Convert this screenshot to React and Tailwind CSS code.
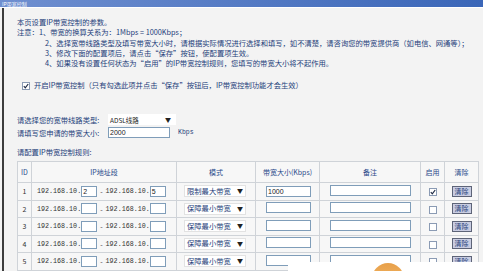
import React from 'react';

const font = { fontFamily: '"Noto Sans CJK SC", "Noto Sans", sans-serif' };

function Check({ checked }) {
  return (
    <span className="inline-flex w-[8px] h-[8px] border border-[#8b9bb4] bg-white items-center justify-center align-middle">
      {checked && (
        <svg width="6" height="6" viewBox="0 0 6 6">
          <path d="M0.8 3.2 L2.3 4.8 L5.2 1" stroke="#1e2a44" strokeWidth="1.2" fill="none" />
        </svg>
      )}
    </span>
  );
}

function Box({ w, value }) {
  return (
    <span
      className={`inline-flex h-[11px] ${w} border border-[#7f9db9] bg-white items-center pl-[1px] text-[7px] text-[#222] leading-none`}
      style={{ fontFamily: '"Liberation Sans", sans-serif' }}
    >
      {value}
    </span>
  );
}

function IpPart() {
  return (
    <span
      className="text-[6.7px] text-[#333]"
      style={{ fontFamily: '"Liberation Mono", monospace' }}
    >
      192.168.10.
    </span>
  );
}

function Row({ id, from, to, mode, bw, on }) {
  return (
    <tr className="h-[17.5px]">
      <td className="border border-[#cfd3d8] text-center text-[7px] text-[#333]">{id}</td>
      <td className="border border-[#cfd3d8] pl-[5px]">
        <div className="flex items-center">
          <IpPart />
          <Box w="w-[16px]" value={from} />
          <span className="text-[7px] text-[#333] px-[3px]">-</span>
          <IpPart />
          <Box w="w-[16px]" value={to} />
        </div>
      </td>
      <td className="border border-[#cfd3d8] pl-[7px]">
        <div className="flex items-center w-[62px] h-[12px] bg-white border border-[#e2e2e2] text-[7.3px] text-[#1f3f7a] pl-[2px] leading-none">
          <span className="flex-1">{mode}</span>
          <span className="text-[6px] text-[#222] pr-[2px]">▼</span>
        </div>
      </td>
      <td className="border border-[#cfd3d8] pl-[10px]">
        <Box w="w-[45px]" value={bw} />
      </td>
      <td className="border border-[#cfd3d8] pl-[10px]">
        <Box w="w-[81px]" value="" />
      </td>
      <td className="border border-[#cfd3d8] text-center">
        <Check checked={on} />
      </td>
      <td className="border border-[#cfd3d8] text-center">
        <span className="inline-flex items-center justify-center w-[20px] h-[11px] bg-[#c9cde2] border border-[#5d6478] text-[7px] text-[#1f3f7a] leading-none">
          清除
        </span>
      </td>
    </tr>
  );
}

export default function App() {
  const rows = [
    { id: 1, from: '2', to: '5', mode: '限制最大带宽', bw: '1000', on: true },
    { id: 2, from: '', to: '', mode: '保障最小带宽', bw: '', on: false },
    { id: 3, from: '', to: '', mode: '保障最小带宽', bw: '', on: false },
    { id: 4, from: '', to: '', mode: '保障最小带宽', bw: '', on: false },
    { id: 5, from: '', to: '', mode: '保障最小带宽', bw: '', on: false },
  ];

  return (
    <div className="relative w-[483px] h-[271px] overflow-hidden bg-[#f3f3f3]" style={font}>
      <div className="h-[7px] bg-gradient-to-r from-[#6f8fd0] to-[#3a66b8] text-white text-[5px] leading-[7px] pl-[2px]">
        IP带宽控制
      </div>
      <div className="h-[1px] bg-white" />
      <div className="ml-[2px] h-[263px] border-l-2 border-[#3c3c3c] pl-[13px] pt-[9px] text-[7.3px] leading-[10.3px] text-[#23407a]">
        <div>本页设置IP带宽控制的参数。</div>
        <div>注意：1、带宽的换算关系为：1Mbps = 1000Kbps；</div>
        <div className="pl-[28px] whitespace-nowrap">
          2、选择宽带线路类型及填写带宽大小时，请根据实际情况进行选择和填写，如不清楚，请咨询您的带宽提供商（如电信、网通等）；
        </div>
        <div className="pl-[28px]">3、修改下面的配置项后，请点击“保存”按钮，使配置项生效。</div>
        <div className="pl-[28px]">4、如果没有设置任何状态为“启用”的IP带宽控制规则，您填写的带宽大小将不起作用。</div>

        <div className="flex items-center gap-[4px] pl-[5px] mt-[12px]">
          <Check checked />
          <span>开启IP带宽控制（只有勾选此项并点击“保存”按钮后，IP带宽控制功能才会生效）</span>
        </div>

        <div className="mt-[23px] flex items-center h-[12px]">
          <span className="w-[91px]">请选择您的宽带线路类型:</span>
          <span className="flex items-center w-[68px] h-[11px] bg-white text-[6.5px] text-[#222] pl-[2px] leading-none">
            <span className="flex-1">ADSL线路</span>
            <span className="text-[6px] pr-[5px]">▼</span>
          </span>
        </div>
        <div className="mt-[1px] flex items-center h-[12px]">
          <span className="w-[91px]">请填写您申请的带宽大小:</span>
          <Box w="w-[62px]" value="2000" />
          <span className="ml-[8px] text-[6.5px]" style={{ fontFamily: '"Liberation Mono", monospace' }}>Kbps</span>
        </div>
        <div className="mt-[8px]">请配置IP带宽控制规则:</div>

        <table className="mt-[4px] w-[461px] table-fixed border-collapse bg-[#f7f7f7]">
          <colgroup>
            <col className="w-[14px]" />
            <col className="w-[145px]" />
            <col className="w-[79px]" />
            <col className="w-[64px]" />
            <col className="w-[101px]" />
            <col className="w-[24px]" />
            <col className="w-[34px]" />
          </colgroup>
          <thead>
            <tr className="h-[21px] text-[7px] text-[#2a4a8a] font-normal">
              <th className="border border-[#cfd3d8] font-normal">ID</th>
              <th className="border border-[#cfd3d8] font-normal">IP地址段</th>
              <th className="border border-[#cfd3d8] font-normal">模式</th>
              <th className="border border-[#cfd3d8] font-normal">带宽大小(Kbps)</th>
              <th className="border border-[#cfd3d8] font-normal">备注</th>
              <th className="border border-[#cfd3d8] font-normal">启用</th>
              <th className="border border-[#cfd3d8] font-normal">清除</th>
            </tr>
          </thead>
          <tbody>
            {rows.map((r) => (
              <Row key={r.id} {...r} />
            ))}
          </tbody>
        </table>
      </div>

      <div className="absolute left-[288px] top-[262px] w-[195px] h-[9px] bg-white overflow-hidden">
        <div className="absolute left-[84px] top-[1px] w-[32px] h-[32px] rounded-full bg-gradient-to-b from-[#e8a04a] to-[#f6c070]" />
      </div>
    </div>
  );
}
